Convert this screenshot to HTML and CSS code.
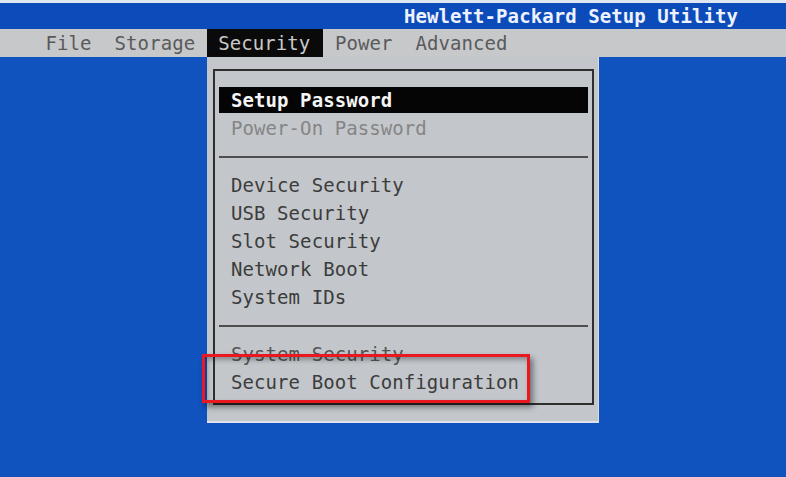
FILE: index.html
```html
<!DOCTYPE html>
<html lang="en">
<head>
  <meta charset="UTF-8" />
  <meta name="viewport" content="width=device-width, initial-scale=1" />
  <title>Hewlett-Packard Setup Utility</title>
  <link rel="stylesheet" href="styles.css">
</head>
<body>

  <div class="topline"></div>
  <header class="titlebar">Hewlett-Packard Setup Utility</header>

  <nav class="menubar">
    <span class="menu-item">File</span>
    <span class="menu-item">Storage</span>
    <span class="menu-item active">Security</span>
    <span class="menu-item">Power</span>
    <span class="menu-item">Advanced</span>
  </nav>

  <div class="dropdown">
    <div class="dropdown-inner">
      <div class="group">
        <div class="row selected">Setup Password</div>
        <div class="row dim">Power-On Password</div>
      </div>
      <hr class="sep">
      <div class="group">
        <div class="row">Device Security</div>
        <div class="row">USB Security</div>
        <div class="row">Slot Security</div>
        <div class="row">Network Boot</div>
        <div class="row">System IDs</div>
      </div>
      <hr class="sep">
      <div class="group marked">
        <div class="row muted">System Security</div>
        <div class="row">Secure Boot Configuration</div>
        <div class="callout"></div>
      </div>
    </div>
  </div>

</body>
</html>
```

FILE: styles.css
```css
body {
  margin: 0;
  background: #1052be;
  font-family: "DejaVu Sans Mono", "Liberation Mono", monospace;
  font-size: 19px;
  letter-spacing: 0.08px;
  height: 477px;
  overflow: hidden;
}
.topline {
  height: 3px;
  background: #dfe6f4;
}
.titlebar {
  height: 26px;
  line-height: 26px;
  background: #0c4cba;
  color: #eef2ff;
  text-align: right;
  padding-right: 48px;
  font-weight: bold;
}
.menubar {
  display: flex;
  height: 28px;
  line-height: 28px;
  padding-left: 34px;
  background: #c7c8ca;
  color: #5a5a5a;
}
.menu-item {
  padding: 0 11.5px;
}
.menu-item.active {
  background: #0a0a0a;
  color: #c9c9c9;
  padding-right: 13px;
}
.dropdown {
  margin-left: 207px;
  width: 392px;
  height: 366px;
  box-sizing: border-box;
  padding: 12px 4px 16px 6px;
  background: #c3c7cb;
  border-bottom: 2px solid #dde2ee;
  border-right: 1px solid #d8dde6;
}
.dropdown-inner {
  height: 100%;
  box-sizing: border-box;
  border: 2px solid #2e2e2e;
  padding: 15px 4px 0 4px;
}
.row {
  height: 28px;
  line-height: 28px;
  padding-left: 12px;
  color: #3c3c3c;
  white-space: nowrap;
}
.row.selected {
  height: 26px;
  line-height: 26px;
  margin: 1px 0;
  background: #050505;
  color: #f4f4f4;
  font-weight: bold;
}
.row.dim {
  color: #858585;
}
.row.muted {
  color: #555;
}
.sep {
  margin: 14px 0 13px 0;
  border: none;
  border-top: 2px solid #4e4e4e;
  height: 0;
}
.marked {
  position: relative;
}
.callout {
  position: absolute;
  left: -17px;
  top: 14px;
  width: 328px;
  height: 49px;
  box-sizing: border-box;
  border: 3px solid #ea1820;
  box-shadow: 3px 4px 6px rgba(0, 0, 0, 0.45), inset 2px 3px 5px rgba(0, 0, 0, 0.3);
}
```
